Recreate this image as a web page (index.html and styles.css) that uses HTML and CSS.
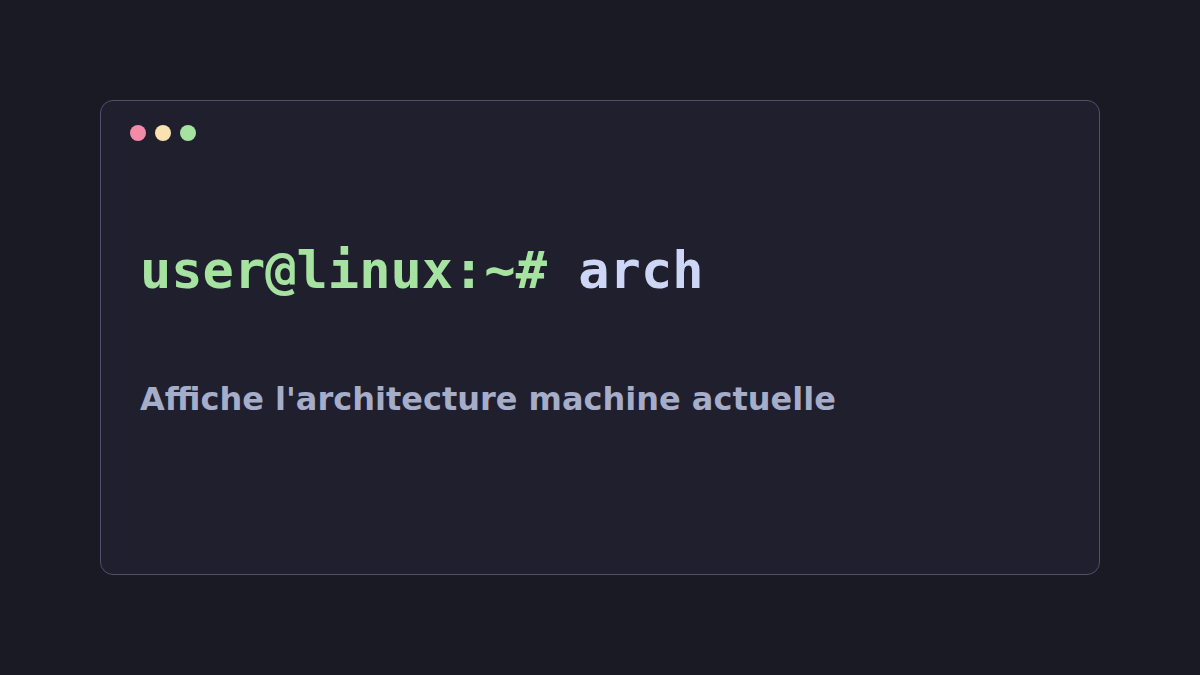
FILE: index.html
```html
<!DOCTYPE html>
<html>
<head>
<meta charset="utf-8">
<link rel="stylesheet" href="styles.css">
</head>
<body>
<div class="stage">
  <div class="terminal">
    <div class="bar">
      <span class="dot red"></span>
      <span class="dot yellow"></span>
      <span class="dot green"></span>
    </div>
    <div class="content">
      <div class="cmd"><span class="prompt">user@linux:~#</span> <span class="name">arch</span></div>
      <div class="desc">Affiche l'architecture machine actuelle</div>
    </div>
  </div>
</div>
</body>
</html>
```
FILE: styles.css
```css
html, body {
  margin: 0;
  padding: 0;
  background: #1a1a24;
}
.stage {
  width: 1200px;
  height: 675px;
  padding: 100px;
  box-sizing: border-box;
}
.terminal {
  width: 1000px;
  height: 475px;
  box-sizing: border-box;
  background: #1f1f2e;
  border: 1px solid #50506a;
  border-radius: 13px;
}
.bar {
  display: flex;
  gap: 9px;
  padding: 24px 0 0 29px;
}
.dot {
  width: 16px;
  height: 16px;
  border-radius: 50%;
  display: block;
}
.red { background: #f38ba8; }
.yellow { background: #f9e2af; }
.green { background: #a6e3a1; }
.content {
  padding: 99px 0 0 39px;
}
.cmd {
  font-family: "DejaVu Sans Mono", monospace;
  font-weight: bold;
  font-size: 52px;
  line-height: 60px;
  white-space: pre;
}
.prompt { color: #a6e3a1; }
.name { color: #cdd6f4; }
.desc {
  margin-top: 80px;
  font-family: "DejaVu Sans", sans-serif;
  font-weight: bold;
  font-size: 32px;
  line-height: 38px;
  color: #a6adc8;
}
```
